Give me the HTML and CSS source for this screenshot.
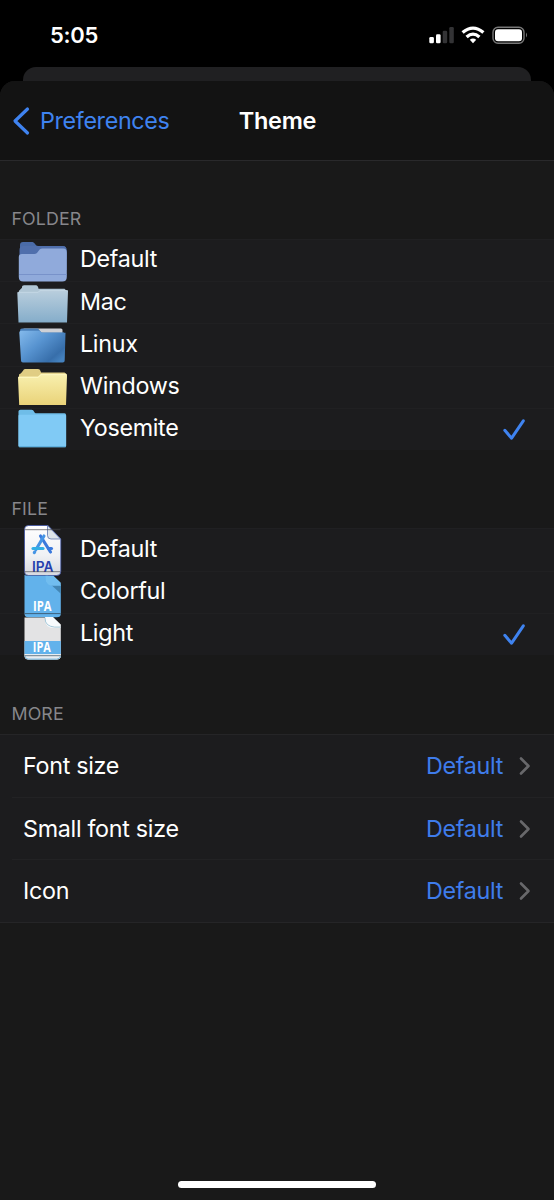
FILE: index.html
```html
<!DOCTYPE html>
<html lang="en">
<head>
<meta charset="utf-8">
<title>Theme</title>
<link rel="stylesheet" href="styles.css">
</head>
<body>
<div class="statusbar">
  <span class="time">5:05</span>
  <svg class="status-icons" width="102" height="22" viewBox="427 25 102 22">
    <g fill="#fff"><rect x="429.3" y="37" width="4.6" height="6.3" rx="1.3"/><rect x="436" y="34.3" width="4.6" height="9" rx="1.3"/></g>
    <g fill="#333335"><rect x="442.7" y="30.8" width="4.5" height="12.5" rx="1.3"/><rect x="449.3" y="27" width="4.5" height="16.3" rx="1.3"/></g>
    <g fill="none" stroke="#fff" stroke-width="3.3"><path d="M462.6 32.6Q473 23.6 483.4 32.6"/><path d="M466.6 37Q473 31.2 479.4 37"/></g>
    <path d="M469.8 39.8Q473 37.2 476.2 39.8L473 43.3Z" fill="#fff"/>
    <rect x="493" y="27.2" width="31" height="16" rx="5" fill="none" stroke="#777" stroke-width="1.4"/>
    <rect x="495" y="29.2" width="27" height="12" rx="3" fill="#fff"/>
    <path d="M526 32.5q2 2.5 0 5Z" fill="#777"/>
  </svg>
</div>
<div class="back-sheet"></div>
<main class="sheet">
  <header class="nav">
    <a class="back"><svg width="18" height="30" viewBox="0 0 18 30"><path d="M15.500 3L3 15L15.500 27" fill="none" stroke="#3f83f0" stroke-width="3.200" stroke-linecap="round" stroke-linejoin="round"/></svg><span>Preferences</span></a>
    <h1>Theme</h1>
    <span></span>
  </header>

  <h2 class="heading folder-heading">FOLDER</h2>
  <ul class="group">
    <li class="row">
      <svg class="icon" viewBox="0 239 80 42"><path d="M20 265V244q0-3 3-3h9.500c2 0 3 4 5.500 4H62.500q4 0 4 4v20H20Z" fill="#4a6ba8"/><path d="M19.500 258V249q0-4 4-4H62.500q4 0 4 4v9Z" fill="#506fac"/><path d="M18.800 276V256q0-3 3-3h12.500c4 0 4-5.500 8-5.500h21q3.500 0 3.500 4V276q0 4.500-4.500 4.500H23.300q-4.500 0-4.500-4.500Z" fill="#90aadb"/><path d="M19 273.500H66.800" stroke="#7892ca"/></svg>
      <span class="name">Default</span>
    </li>
    <li class="row">
      <svg class="icon" viewBox="0 281.200 80 42"><defs><linearGradient id="mac" x2="0" y2="1"><stop stop-color="#b9cedd"/><stop offset="1" stop-color="#85adca"/></linearGradient></defs><path d="M19 294V290L22 287v-1q0-1.500 2-1.500h12q2 0 2.500 3.500H64.500l2 2V296Z" fill="#b0c6d5"/><path d="M17.300 291.500H38l2-1.700H68L67 321.700H18.500Z" fill="url(#mac)"/><path d="M18 291.500H38l2-1.700H67.500" fill="none" stroke="#c8dbe7" stroke-width=".8"/></svg>
      <span class="name">Mac</span>
    </li>
    <li class="row">
      <svg class="icon" viewBox="0 323.400 80 42"><defs><linearGradient id="linux" x2="1" y2=".8"><stop stop-color="#84baec"/><stop offset=".45" stop-color="#5793d0"/><stop offset=".85" stop-color="#376eaa"/><stop offset="1" stop-color="#4582bf"/></linearGradient></defs><path d="M23 330.500V329q0-1 1.500-1H61q1.500 0 1.500 1.500V336H23Z" fill="#ced0d5"/><path d="M20 336v-6q0-2 2-2H38l3.500 4H64v4Z" fill="#4a80ba"/><path d="M19.300 332q0-1.800 2-1.800H38.500q1 0 2 1t3 1H65.500L64.700 360q0 2-2 2H23q-2 0-2-2Z" fill="url(#linux)"/></svg>
      <span class="name">Linux</span>
    </li>
    <li class="row">
      <svg class="icon" viewBox="0 365.600 80 42"><defs><linearGradient id="win" x2="0" y2="1"><stop stop-color="#f8f0af"/><stop offset="1" stop-color="#ead379"/></linearGradient></defs><path d="M19 379v-5l2-1.200 2-2.500q.7-1.700 2-1.700h13q2 0 2.500 2l.5 1.400H64.500l2 1.500v4.500Z" fill="#e0cd84"/><path d="M18 377q0-1 1.500-1H38l3-2.600H65.500q1.700 0 1.500 1.600L66 404.500H19.200Z" fill="url(#win)"/><path d="M18.500 377H38l3-2.700H66" fill="none" stroke="#fff9c7" stroke-width=".8"/></svg>
      <span class="name">Windows</span>
    </li>
    <li class="row">
      <svg class="icon" viewBox="0 407.800 80 42"><path d="M18.500 445.500V411q0-1.500 2-1.500h11c3 0 2 3.600 5 3.600H64.500q1.600 0 1.600 2V445.500q0 1.500-1.500 1.500H20q-1.500 0-1.500-1.500Z" fill="#6fbde8"/><path d="M18.500 415.500q0-1 1.500-1H64.500q1.600 0 1.600 1V445.500q0 1-1.500 1H20q-1.500 0-1.500-1Z" fill="#80caf5"/><path d="M19 446.500H66" stroke="#5aacda"/></svg>
      <span class="name">Yosemite</span>
      <svg class="check" width="24" height="24" viewBox="0 0 24 24"><path d="M2.800 12.300L9.600 20.200L21.300 2.800" fill="none" stroke="#3f83f0" stroke-width="3" stroke-linecap="round" stroke-linejoin="round"/></svg>
    </li>
  </ul>

  <h2 class="heading">FILE</h2>
  <ul class="group">
    <li class="row">
      <svg class="icon" viewBox="0 528.500 80 42"><defs><linearGradient id="paper" x2="0" y2="1"><stop stop-color="#fff"/><stop offset=".6" stop-color="#f0f1f4"/><stop offset="1" stop-color="#d6d8df"/></linearGradient></defs><path d="M24.500 529q0-4 4-4H48L60.800 538.500V571q0 4-4 4H28.500q-4 0-4-4Z" fill="url(#paper)" stroke="#3148a6" stroke-width=".7"/><path d="M47.500 525v10q0 3.500 3.500 3.500h9.500Z" fill="#dce4ea" stroke="#4c64a5" stroke-width=".7"/><g fill="none" stroke-linecap="round" stroke-width="3.100"><path d="M40.500 535.500L50.500 551.500" stroke="#3a78dc"/><path d="M44 535.500L36 549M34.800 551.300l-.5.800" stroke="#4594e5"/><path d="M33 548H43" stroke="#31aee5"/><path d="M48.500 548H51.500" stroke="#3a78dc"/></g><text x="42.700" y="571" class="badge blue" textLength="21.500" lengthAdjust="spacingAndGlyphs">IPA</text><path d="M24.500 529.200H60.500M24.500 571.200H60.500" stroke="#47484c" stroke-width=".9" opacity=".75"/></svg>
      <span class="name">Default</span>
    </li>
    <li class="row">
      <svg class="icon" viewBox="0 570.700 80 42"><path d="M24.500 574.500q1.500 1 3 1H48L60.800 585V613.500q0 3.500-4 3.500H28.500q-4 0-4-3.500Z" fill="#62b2eb"/><path d="M50 583.500l10.800 10V585Z" fill="#4386b4"/><path d="M45.500 575.500h8L60.800 582.500V585.500H53q-5 0-7-4.500Z" fill="#71bdef"/><text x="42.300" y="611" class="badge small" textLength="18.500" lengthAdjust="spacingAndGlyphs">IPA</text><path d="M24.500 613.300H60.800" stroke="#3a5871" stroke-width=".9"/></svg>
      <span class="name">Colorful</span>
    </li>
    <li class="row">
      <svg class="icon" viewBox="0 612.900 80 42"><path d="M24.500 617.500H49L60.800 628V655.500q0 4-4 4H28.500q-4 0-4-4Z" fill="#e3e3e4"/><path d="M45 617h8L60.800 624.500V628H54q-9 0-9-9Z" fill="#f8fbfd"/><path d="M24.500 641H60.800V654H24.500Z" fill="#62b2eb"/><path d="M24.500 654H60.800v1.500q0 4-4 4H28.500q-4 0-4-4Z" fill="#e8edf1"/><path d="M25 656q.5 3 3.500 3h28q3.500 0 4-3" fill="none" stroke="#71b6df" stroke-width=".9"/><path d="M45 617.500q0 5 2.500 7t7 2.500H60.500" fill="none" stroke="#83b2c9" stroke-width=".7"/><text x="41.800" y="652.200" class="badge small" textLength="18" lengthAdjust="spacingAndGlyphs">IPA</text><path d="M24.500 655.600H60.800" stroke="#5d7380" stroke-width=".9"/></svg>
      <span class="name">Light</span>
      <svg class="check" width="24" height="24" viewBox="0 0 24 24"><path d="M2.800 12.300L9.600 20.200L21.300 2.800" fill="none" stroke="#3f83f0" stroke-width="3" stroke-linecap="round" stroke-linejoin="round"/></svg>
    </li>
  </ul>

  <h2 class="heading more-heading">MORE</h2>
  <ul class="group settings">
    <li class="setting"><span>Font size</span><span class="value">Default</span><svg width="12" height="20" viewBox="0 0 12 20"><path d="M2 2.500L9.500 10L2 17.500" class="chev"/></svg></li>
    <li class="setting"><span>Small font size</span><span class="value">Default</span><svg width="12" height="20" viewBox="0 0 12 20"><path d="M2 2.500L9.500 10L2 17.500" class="chev"/></svg></li>
    <li class="setting"><span>Icon</span><span class="value">Default</span><svg width="12" height="20" viewBox="0 0 12 20"><path d="M2 2.500L9.500 10L2 17.500" class="chev"/></svg></li>
  </ul>
  <div class="home"></div>
</main>
</body>
</html>
```
FILE: styles.css
```css
* { box-sizing: border-box; }
body {
  margin: 0;
  height: 1200px;
  overflow: hidden;
  display: flex;
  flex-direction: column;
  background: #000;
  color: #fff;
  font-family: Inter, "Liberation Sans", sans-serif;
  font-size: 23.3px;
  letter-spacing: -.3px;
}
h1, h2, ul { margin: 0; padding: 0; list-style: none; }
svg { display: block; flex: none; }
.statusbar {
  height: 67px;
  padding: 4px 25px 0 50px;
  display: flex;
  align-items: center;
  justify-content: space-between;
}
.time { font-size: 22px; font-weight: 600; padding-bottom: 1px; }
.back-sheet {
  height: 14px;
  margin: 0 23px;
  background: #202022;
  border-radius: 13px 13px 0 0;
}
.sheet {
  flex: 1;
  display: flex;
  flex-direction: column;
  background: #191919;
  border-radius: 15px 15px 0 0;
  overflow: hidden;
}
.nav {
  flex: none;
  height: 80px;
  padding: 0 11px 0 12px;
  display: grid;
  grid-template-columns: 1fr auto 1fr;
  align-items: center;
  background: #131313;
  border-bottom: 1.500px solid #29292b;
}
.back { display: flex; align-items: center; gap: 10px; color: #3f83f0; letter-spacing: -.35px; }
h1 { font-size: 23.500px; font-weight: 600; }
.heading {
  flex: none;
  height: 78.500px;
  padding: 49px 0 0 11.500px;
  color: #87878b;
  font-size: 17.800px;
  line-height: 20px;
  font-weight: 400;
  letter-spacing: .1px;
}
.folder-heading { height: 78px; padding-top: 48px; }
.more-heading { height: 78.500px; }
.group { flex: none; background: #1c1c1e; }
.row {
  height: 42.200px;
  display: flex;
  align-items: center;
  padding-right: 28px;
  border-top: 1px solid #202022;
}
.icon { width: 80px; height: 42px; margin-top: 0; overflow: visible; }
.name { flex: 1; padding-bottom: 3.500px; }
.check { margin-top: 2px; }
.badge {
  font-family: "Open Sans", sans-serif;
  font-size: 13.500px;
  font-weight: 700;
  text-anchor: middle;
  letter-spacing: 0;
  fill: #fff;
}
.blue { font-family: Inter, sans-serif; font-weight: 600; font-size: 14px; fill: #263fae; }
.small { font-size: 13.500px; }
.settings { border-top: 1px solid #252527; border-bottom: 1px solid #252527; }
.setting {
  height: 62.400px;
  margin-left: 12px;
  padding: 0 23px 0 11px;
  display: flex;
  align-items: center;
}
.setting span { padding-bottom: 1px; }
.setting + .setting { border-top: 1px solid #222224; }
.value { margin-left: auto; margin-right: 16px; color: #3f7ceb; }
.chev { fill: none; stroke: #68686b; stroke-width: 2.600; stroke-linecap: round; stroke-linejoin: round; }
.home { width: 198px; height: 7px; margin: auto auto 12px; border-radius: 4px; background: #fff; }
```
